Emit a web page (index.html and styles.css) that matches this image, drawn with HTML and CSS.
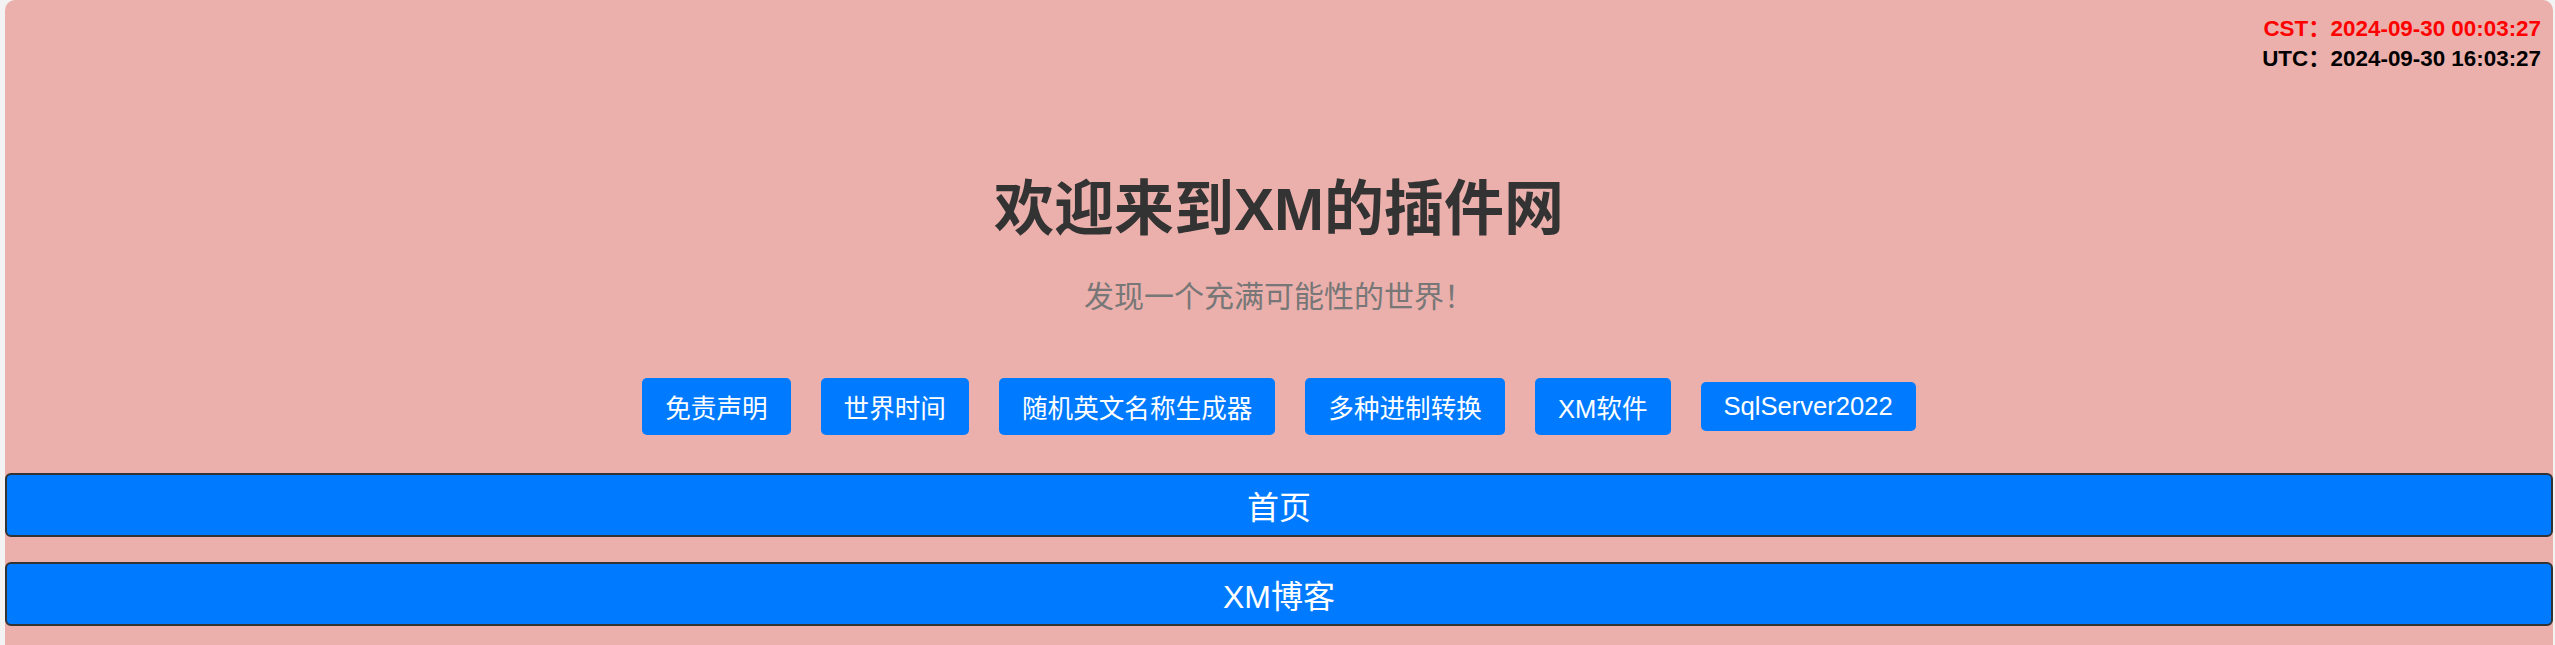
FILE: index.html
```html
<!DOCTYPE html>
<html lang="zh-CN">
<head>
<meta charset="utf-8">
<title>欢迎来到XM的插件网</title>
<link rel="stylesheet" href="styles.css">
</head>
<body>
<div class="page">
  <div class="clock">
    <div class="clock-line cst">CST：2024-09-30 00:03:27</div>
    <div class="clock-line utc">UTC：2024-09-30 16:03:27</div>
  </div>
  <header class="hero">
    <h1 class="title">欢迎来到XM的插件网</h1>
    <p class="subtitle">发现一个充满可能性的世界！</p>
  </header>
  <nav class="links">
    <a class="btn" href="#">免责声明</a>
    <a class="btn" href="#">世界时间</a>
    <a class="btn" href="#">随机英文名称生成器</a>
    <a class="btn" href="#">多种进制转换</a>
    <a class="btn" href="#">XM软件</a>
    <a class="btn" href="#">SqlServer2022</a>
  </nav>
  <div class="bars">
    <a class="bar" href="#">首页</a>
    <a class="bar" href="#">XM博客</a>
  </div>
</div>
</body>
</html>
```

FILE: styles.css
```css
html, body {
  margin: 0;
  padding: 0;
}
body {
  background: #f3f3f3;
  font-family: "Liberation Sans", Arial, "Noto Sans CJK SC", sans-serif;
  overflow: hidden;
}
.page {
  position: relative;
  margin: 0 2px 0 5px;
  background: #ebb0ac;
  border-radius: 10px 10px 0 0;
  padding: 166px 0 19px;
  min-height: 645px;
  box-sizing: border-box;
}
.clock {
  position: absolute;
  top: 14px;
  right: 12px;
  font-weight: bold;
  font-size: 22.4px;
  line-height: 30px;
  text-align: right;
}
.clock-line {
  white-space: nowrap;
}
.cst {
  color: #ff0000;
}
.utc {
  color: #000000;
}
.hero {
  text-align: center;
}
.title {
  margin: 0;
  font-size: 60px;
  font-weight: bold;
  color: #333333;
  line-height: 87px;
}
.subtitle {
  margin: 22px 0 0;
  font-size: 30px;
  line-height: 43px;
  color: #777777;
}
.links {
  display: flex;
  justify-content: center;
  align-items: center;
  gap: 30px;
  margin-top: 60px;
}
.btn {
  display: block;
  background: #007bff;
  color: #ffffff;
  text-decoration: none;
  font-size: 25.6px;
  padding: 10px 23px;
  border-radius: 5px;
}
.bars {
  display: flex;
  flex-direction: column;
  gap: 25px;
  margin-top: 38px;
}
.bar {
  display: flex;
  align-items: center;
  justify-content: center;
  height: 60px;
  background: #007bff;
  color: #ffffff;
  text-decoration: none;
  font-size: 32px;
  border: 2px solid #333333;
  border-radius: 6px;
}
```
